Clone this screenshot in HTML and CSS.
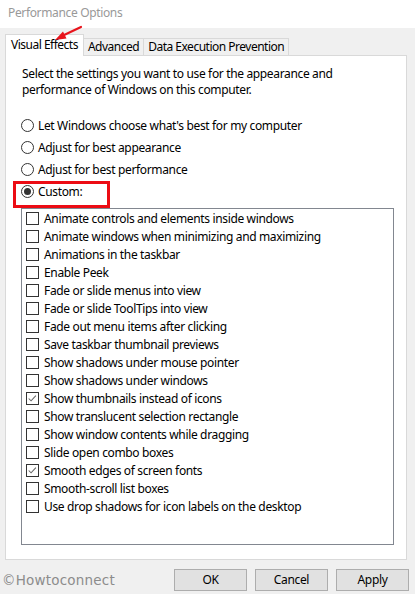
FILE: index.html
```html
<!DOCTYPE html>
<html>
<head>
<meta charset="utf-8">
<link rel="stylesheet" href="styles.css">
</head>
<body>
<div class="window">
  <div class="titlebar">Performance Options</div>
  <div class="tabs">
    <div class="tab active">Visual Effects</div>
    <div class="tab">Advanced</div>
    <div class="tab">Data Execution Prevention</div>
  </div>
  <div class="panel">
    <p class="desc">Select the settings you want to use for the appearance and<br>performance of Windows on this computer.</p>
    <div class="radios">
      <div class="radio-row"><span class="radio"></span><span>Let Windows choose what's best for my computer</span></div>
      <div class="radio-row"><span class="radio"></span><span>Adjust for best appearance</span></div>
      <div class="radio-row"><span class="radio"></span><span>Adjust for best performance</span></div>
      <div class="radio-row"><span class="radio checked"></span><span>Custom:</span></div>
    </div>
    <div class="listbox">
      <div class="item"><span class="box"></span><span>Animate controls and elements inside windows</span></div>
      <div class="item"><span class="box"></span><span>Animate windows when minimizing and maximizing</span></div>
      <div class="item"><span class="box"></span><span>Animations in the taskbar</span></div>
      <div class="item"><span class="box"></span><span>Enable Peek</span></div>
      <div class="item"><span class="box"></span><span>Fade or slide menus into view</span></div>
      <div class="item"><span class="box"></span><span>Fade or slide ToolTips into view</span></div>
      <div class="item"><span class="box"></span><span>Fade out menu items after clicking</span></div>
      <div class="item"><span class="box"></span><span>Save taskbar thumbnail previews</span></div>
      <div class="item"><span class="box"></span><span>Show shadows under mouse pointer</span></div>
      <div class="item"><span class="box"></span><span>Show shadows under windows</span></div>
      <div class="item"><span class="box"><svg viewBox="0 0 13 13" width="11" height="11"><polyline points="2,6.5 4.8,9.3 10.5,3" fill="none" stroke="#666" stroke-width="1.2"/></svg></span><span>Show thumbnails instead of icons</span></div>
      <div class="item"><span class="box"></span><span>Show translucent selection rectangle</span></div>
      <div class="item"><span class="box"></span><span>Show window contents while dragging</span></div>
      <div class="item"><span class="box"></span><span>Slide open combo boxes</span></div>
      <div class="item"><span class="box"><svg viewBox="0 0 13 13" width="11" height="11"><polyline points="2,6.5 4.8,9.3 10.5,3" fill="none" stroke="#666" stroke-width="1.2"/></svg></span><span>Smooth edges of screen fonts</span></div>
      <div class="item"><span class="box"></span><span>Smooth-scroll list boxes</span></div>
      <div class="item"><span class="box"></span><span>Use drop shadows for icon labels on the desktop</span></div>
    </div>
    <div class="highlight"></div>
  </div>
  <div class="footer">
    <div class="watermark">©Howtoconnect</div>
    <div class="buttons">
      <div class="btn">OK</div>
      <div class="btn">Cancel</div>
      <div class="btn">Apply</div>
    </div>
  </div>
  <svg class="arrow" width="40" height="24" viewBox="0 0 40 24">
    <line x1="31" y1="3" x2="12" y2="12" stroke="#e8141c" stroke-width="2.2" stroke-linecap="round"/>
    <polygon points="5,16 13,7.5 16.5,14.5" fill="#e8141c"/>
  </svg>
</div>
</body>
</html>
```

FILE: styles.css
```css
html, body {
  margin: 0;
  padding: 0;
}
body {
  background: #f0f0f0;
  font-family: "Noto Sans", "Open Sans", sans-serif;
  font-size: 12px;
  letter-spacing: -0.35px;
  color: #000;
}
.window {
  position: relative;
  width: 415px;
  height: 594px;
  overflow: hidden;
}
.titlebar {
  height: 28px;
  line-height: 26px;
  background: #fff;
  color: #999;
  padding-left: 8px;
  font-size: 12px;
}
.tabs {
  display: flex;
  align-items: flex-end;
  height: 27px;
  margin-left: 5px;
  position: relative;
  z-index: 1;
}
.tab {
  height: 16px;
  line-height: 15px;
  padding: 0 4px;
  background: #f0f0f0;
  border: 1px solid #d9d9d9;
  border-bottom: none;
  margin-left: -1px;
  white-space: nowrap;
  letter-spacing: -0.5px;
}
.tab:first-child {
  margin-left: 0;
}
.tab.active {
  height: 21px;
  line-height: 19px;
  background: #fff;
  padding: 0 5px;
  margin-bottom: -1px;
  position: relative;
  z-index: 2;
}
.panel {
  position: relative;
  margin: 0 8px 0 5px;
  height: 505px;
  box-sizing: border-box;
  background: #fff;
  border: 1px solid #d9d9d9;
}
.desc {
  margin: 0;
  padding: 10px 0 0 16px;
  line-height: 16px;
}
.radios {
  margin-top: 16px;
  padding-left: 15px;
}
.radio-row {
  display: flex;
  align-items: center;
  height: 22px;
  gap: 4px;
}
.radio {
  width: 13px;
  height: 13px;
  box-sizing: border-box;
  border: 1px solid #333;
  border-radius: 50%;
  display: flex;
  align-items: center;
  justify-content: center;
  background: #fff;
}
.radio.checked::after {
  content: "";
  width: 7px;
  height: 7px;
  border-radius: 50%;
  background: #333;
}
.listbox {
  margin: 6px 0 0 15px;
  width: 373px;
  height: 337px;
  box-sizing: border-box;
  border: 1px solid #828790;
}
.item {
  display: flex;
  align-items: center;
  height: 18px;
  padding-left: 4px;
  gap: 5px;
  white-space: nowrap;
}
.box {
  width: 13px;
  height: 13px;
  box-sizing: border-box;
  border: 1px solid #333;
  display: flex;
  align-items: center;
  justify-content: center;
  background: #fff;
  flex: none;
}
.box svg {
  display: block;
}
.highlight {
  position: absolute;
  left: 7px;
  top: 125px;
  width: 97px;
  height: 27px;
  box-sizing: border-box;
  border: 3px solid #ec0c14;
}
.footer {
  display: flex;
  align-items: center;
  justify-content: space-between;
  height: 34px;
  padding-right: 6px;
}
.watermark {
  padding-left: 2px;
  color: #8c8c8c;
  font-family: "DejaVu Sans", sans-serif;
  font-size: 13.5px;
  letter-spacing: 0.2px;
  margin-top: 6px;
}
.buttons {
  display: flex;
  gap: 8px;
  margin-top: 5px;
}
.btn {
  width: 73px;
  height: 22px;
  box-sizing: border-box;
  border: 1px solid #adadad;
  background: #e1e1e1;
  text-align: center;
  line-height: 20px;
}
.arrow {
  position: absolute;
  left: 50px;
  top: 24px;
  z-index: 5;
}
```
